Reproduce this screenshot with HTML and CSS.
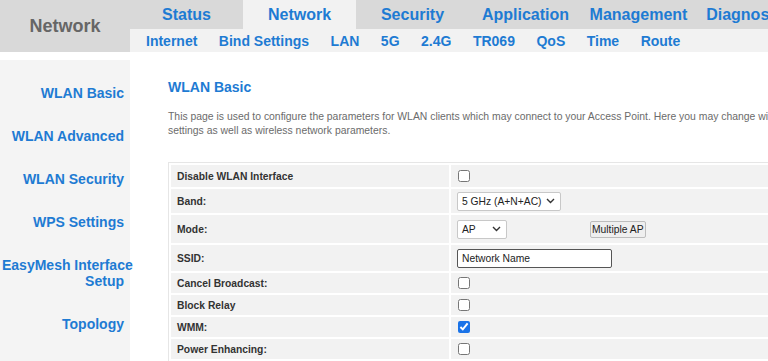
FILE: index.html
```
<!DOCTYPE html>
<html lang="en">
<head>
    <meta charset="UTF-8">
    <title>WLAN Basic</title>
    <link rel="stylesheet" href="styles.css">
</head>
<body>
    <div class="page">
        <header class="topbar">
            <div class="brand">Network</div>
            <div class="navs">
                <nav class="tabs">
                    <a class="tab">Status</a>
                    <a class="tab active">Network</a>
                    <a class="tab">Security</a>
                    <a class="tab">Application</a>
                    <a class="tab">Management</a>
                    <a class="tab">Diagnostics</a>
                </nav>
                <nav class="subnav">
                    <a>Internet</a>
                    <a>Bind Settings</a>
                    <a>LAN</a>
                    <a>5G</a>
                    <a>2.4G</a>
                    <a>TR069</a>
                    <a>QoS</a>
                    <a>Time</a>
                    <a>Route</a>
                </nav>
            </div>
        </header>
        <div class="main">
            <aside class="sidebar">
                <a>WLAN Basic</a>
                <a>WLAN Advanced</a>
                <a>WLAN Security</a>
                <a>WPS Settings</a>
                <a>EasyMesh Interface<br>Setup</a>
                <a>Topology</a>
            </aside>
            <section class="content">
                <h2>WLAN Basic</h2>
                <p class="intro">This page is used to configure the parameters for WLAN clients which may connect to your Access Point. Here you may change wireless settings as well as wireless network parameters.</p>
                <table class="settings">
                    <tr class="row-disable">
                        <td class="label">Disable WLAN Interface</td>
                        <td><input type="checkbox"></td>
                    </tr>
                    <tr class="row-band">
                        <td class="label">Band:</td>
                        <td>
                            <div class="select band">
                                <span>5 GHz (A+N+AC)</span>
                                <svg width="9" height="6" viewBox="0 0 9 6"><path d="M1 1l3.5 3.5L8 1" fill="none" stroke="#333" stroke-width="1.4"/></svg>
                            </div>
                        </td>
                    </tr>
                    <tr class="row-mode">
                        <td class="label">Mode:</td>
                        <td>
                            <div class="mode-line">
                                <div class="select mode">
                                    <span>AP</span>
                                    <svg width="9" height="6" viewBox="0 0 9 6"><path d="M1 1l3.5 3.5L8 1" fill="none" stroke="#333" stroke-width="1.4"/></svg>
                                </div>
                                <button class="multi-ap">Multiple AP</button>
                            </div>
                        </td>
                    </tr>
                    <tr class="row-ssid">
                        <td class="label">SSID:</td>
                        <td><input type="text" class="ssid" value="Network Name"></td>
                    </tr>
                    <tr>
                        <td class="label">Cancel Broadcast:</td>
                        <td><input type="checkbox"></td>
                    </tr>
                    <tr>
                        <td class="label">Block Relay</td>
                        <td><input type="checkbox"></td>
                    </tr>
                    <tr>
                        <td class="label">WMM:</td>
                        <td><input type="checkbox" checked></td>
                    </tr>
                    <tr>
                        <td class="label">Power Enhancing:</td>
                        <td><input type="checkbox"></td>
                    </tr>
                </table>
            </section>
        </div>
    </div>
</body>
</html>
```
FILE: styles.css
```
html, body {
    margin: 0;
    padding: 0;
    overflow: hidden;
    background-color: #fff;
}
body {
    font-family: "Liberation Sans", Arial, sans-serif;
}
.page {
    width: 1000px;
    height: 361px;
}
a {
    color: #1e7bd3;
    text-decoration: none;
    font-weight: bold;
}

/* top navigation */
.topbar {
    display: flex;
    height: 52px;
}
.brand {
    width: 130px;
    height: 52px;
    background-color: #d9d9d9;
    color: #666;
    font-size: 18px;
    font-weight: bold;
    display: flex;
    align-items: center;
    justify-content: center;
}
.navs {
    flex: 1;
    display: flex;
    flex-direction: column;
}
.tabs {
    display: flex;
    height: 29px;
    background-color: #d9d9d9;
}
.tab {
    width: 113px;
    font-size: 16px;
    text-align: center;
    line-height: 29px;
}
.tab.active {
    background-color: #f2f2f2;
}
.subnav {
    height: 23px;
    background-color: #f2f2f2;
    display: flex;
    align-items: center;
    gap: 21.5px;
    padding-left: 16px;
}
.subnav a {
    font-size: 14px;
}

/* body */
.main {
    display: flex;
    margin-top: 8px;
    height: 301px;
}
.sidebar {
    width: 130px;
    box-sizing: border-box;
    background-color: #f4f4f4;
    padding: 25px 6px 0 2px;
    display: flex;
    flex-direction: column;
    gap: 27px;
    text-align: right;
}
.sidebar a {
    font-size: 14px;
    line-height: 16px;
    white-space: nowrap;
}
.content {
    flex: 1;
    padding-left: 38px;
}
.content h2 {
    margin: 19px 0 0 0;
    font-size: 14px;
    line-height: 16px;
    color: #1e7bd3;
}
.intro {
    width: 660px;
    margin: 15px 0 0 0;
    font-size: 10.4px;
    line-height: 14px;
    color: #6b6b6b;
}

/* settings table */
.settings {
    width: 720px;
    margin-top: 24px;
    border: 1px solid #e6e6e6;
    border-spacing: 2px;
    font-size: 10.3px;
}
.settings td {
    background-color: #f2f2f2;
    height: 20px;
    padding: 0 0 0 6px;
    vertical-align: middle;
}
.settings .label {
    width: 272px;
    font-weight: bold;
    color: #333;
}
.row-disable td { height: 22px; }
.row-band td { height: 24px; }
.row-mode td { height: 28px; }
.row-ssid td { height: 26px; }

input[type="checkbox"] {
    width: 12px;
    height: 12px;
    margin: 0 0 0 1px;
    display: block;
    accent-color: #1a73e8;
}
.select {
    display: inline-flex;
    align-items: center;
    justify-content: space-between;
    box-sizing: border-box;
    height: 19px;
    padding: 0 5px 0 4px;
    border: 1px solid #c8c8c8;
    border-radius: 2px;
    background-color: #fff;
    color: #222;
    white-space: nowrap;
    vertical-align: middle;
}
.select.band {
    width: 104px;
}
.select.mode {
    width: 50px;
}
.mode-line {
    display: flex;
    align-items: center;
}
.multi-ap {
    margin-left: 83px;
    height: 17px;
    padding: 0 1px;
    font-family: "Liberation Sans", Arial, sans-serif;
    font-size: 10.3px;
    color: #222;
    background-color: #efefef;
    border: 1px solid #bdbdbd;
    border-radius: 2px;
}
.ssid {
    width: 155px;
    height: 19px;
    box-sizing: border-box;
    padding: 0 4px;
    border: 1px solid #555;
    border-radius: 2px;
    font-family: "Liberation Sans", Arial, sans-serif;
    font-size: 10.3px;
    color: #222;
    display: block;
}
```
